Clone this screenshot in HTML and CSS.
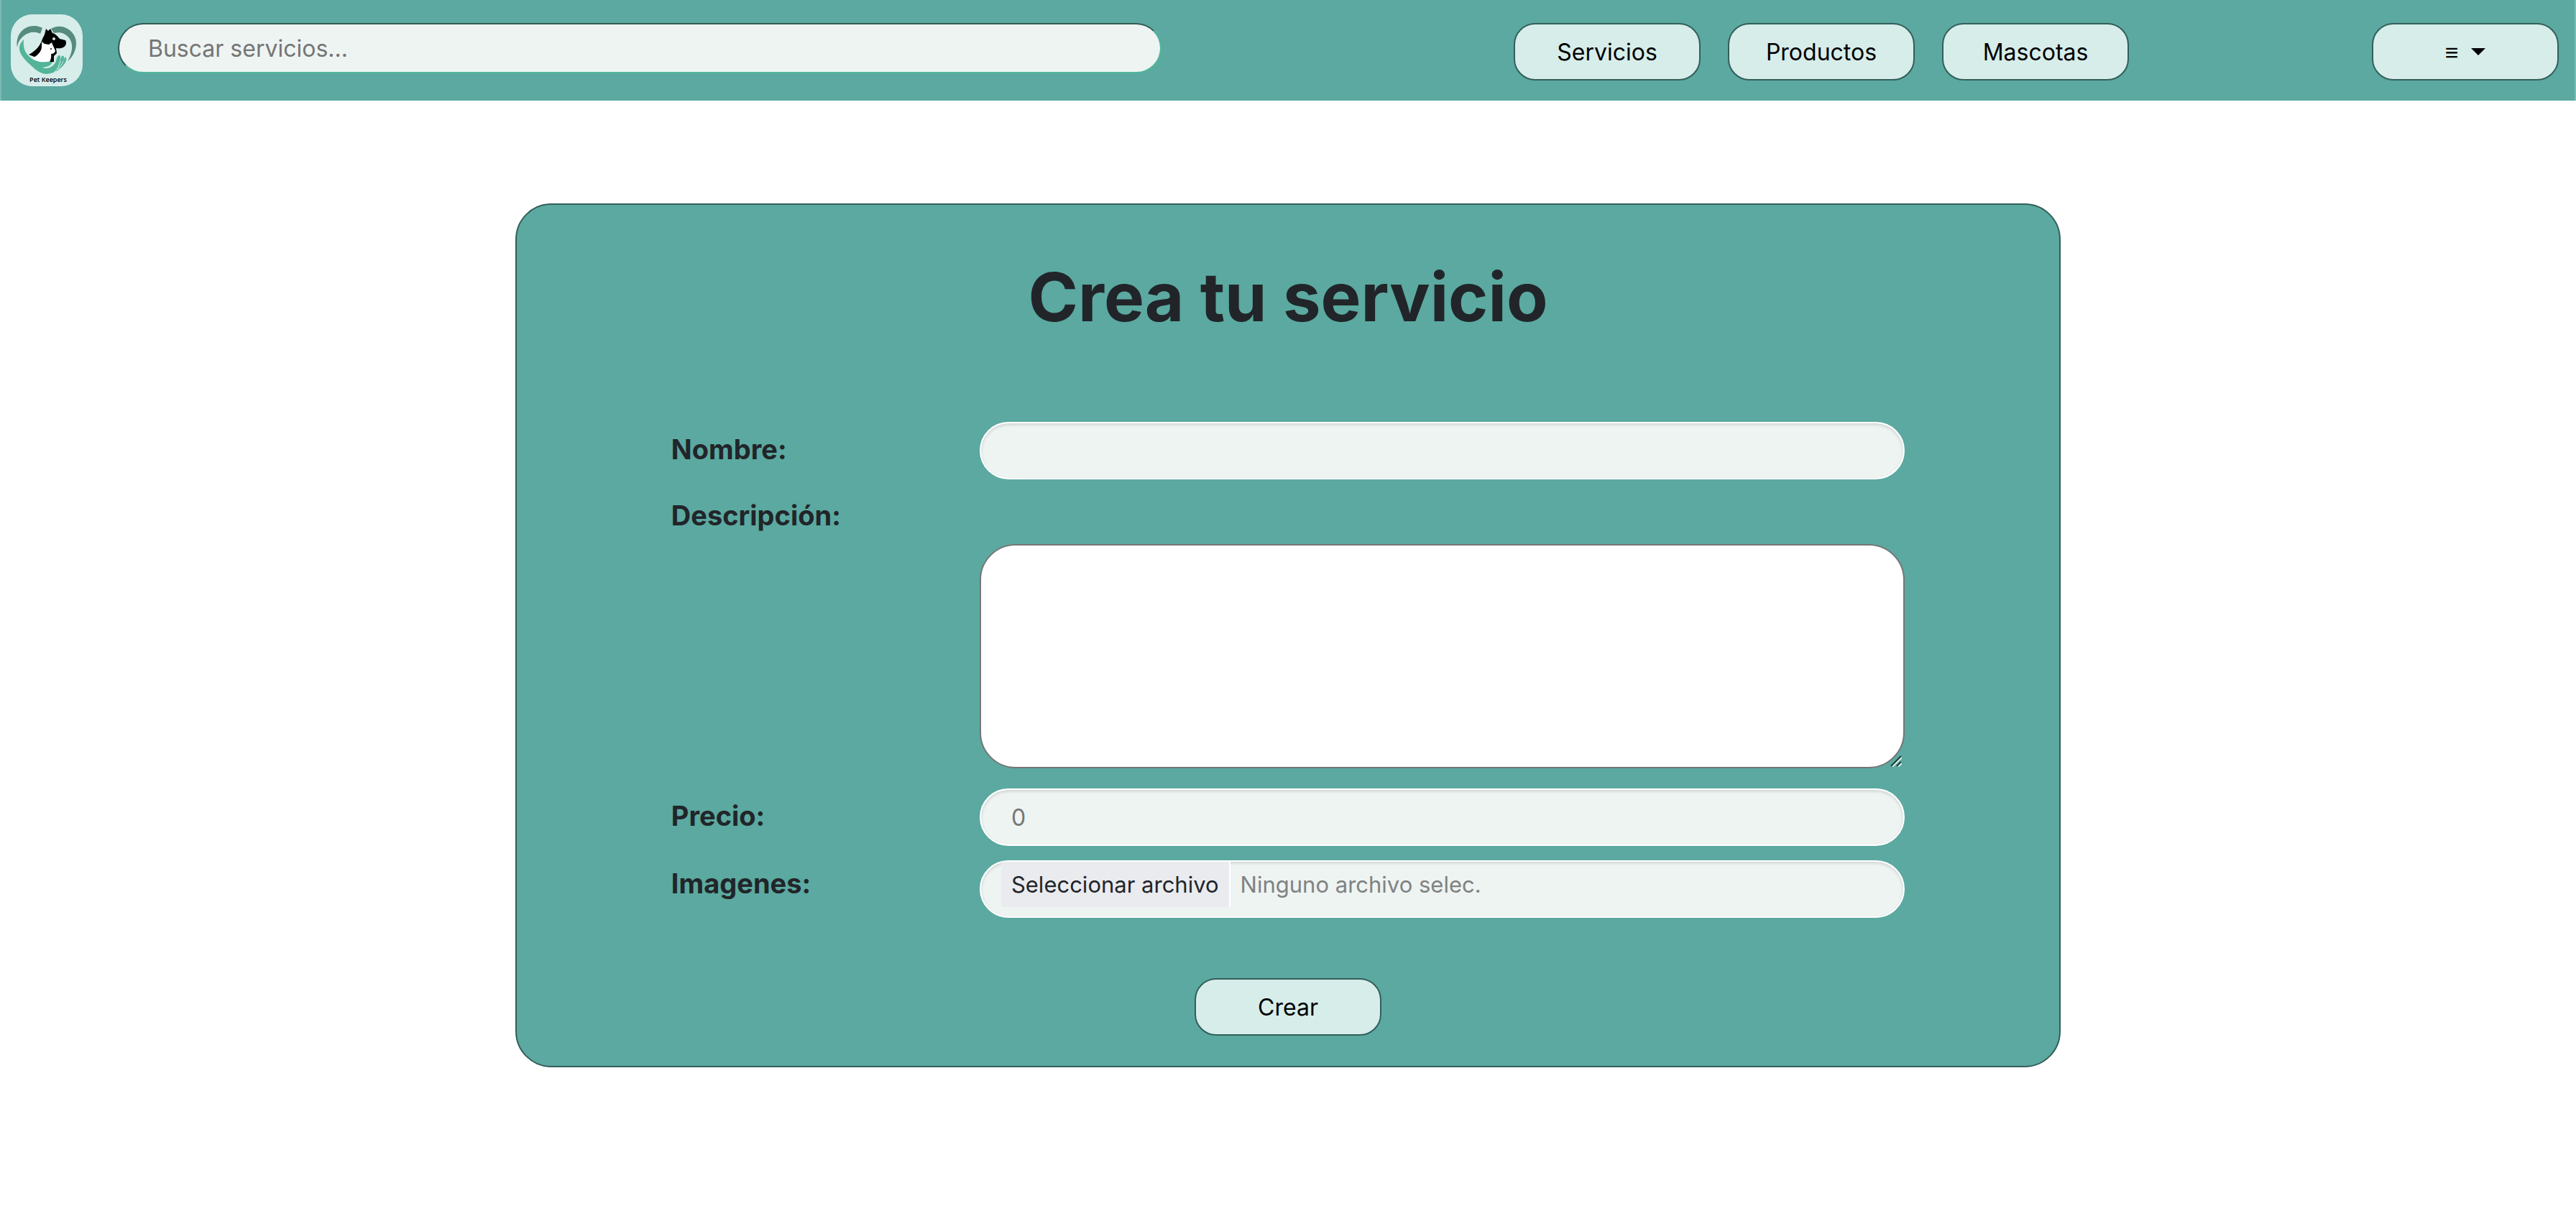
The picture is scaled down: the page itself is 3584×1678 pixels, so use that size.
FILE: index.html
```html
<!DOCTYPE html>
<html lang="es">
<head>
<meta charset="utf-8">
<meta name="viewport" content="width=device-width, initial-scale=1">
<title>Pet Keepers</title>
<link rel="stylesheet" href="styles.css">
</head>
<body>
<header class="topbar">
  <a class="logo" href="#" aria-label="Pet Keepers">
    <svg viewBox="0 0 100 100" aria-hidden="true">
      <path fill="#578b7f" d="M9 46C6 29 17 16 33 16C38 16 42 18 44 19L41 27C33 23 24 25 18 30C12 35 10 39 9 46Z"/>
      <path fill="#578b7f" d="M56 20C63 16 71 16 77 19C90 25 94 39 89 51C87 57 83 62 79 65C86 53 87 42 82 34C76 25 67 24 60 26Z"/>
      <path fill="#000" d="M47 28L49 20L52 23L55 20L58 26C63 27 66 32 68 34L76 36C78 39 77 44 73 46C69 48 65 47 63 47L64 54L60 58L60 66L54 67L25 56C35 51 42 42 44 34Z"/>
      <circle fill="#d7edea" cx="60" cy="34" r="2"/>
      <path fill="#fff" d="M43 45L43 38L47 41L53 42L57 39C58 43 61 47 62 51C61 54 58 55 56 55C57 62 54 68 50 69C43 70 34 66 30 61C38 57 43 51 43 45Z"/>
      <circle cx="56" cy="48" r="1"/>
      <path fill="#54b498" d="M18 35C17 45 19 52 25 58C33 66 43 67 50 66C54 65 57 65 57 68C55 72 49 73 44 74C53 77 60 72 63 65C64 60 65 57 68 57C70 58 69 61 68 65L71 58C74 57 75 59 73 65L75 60C78 59 78 62 76 67C71 75 62 82 50 83C42 83 34 77 27 70C17 61 11 53 12 45C13 40 16 37 18 35Z"/>
      <path fill="none" stroke="#d7edea" stroke-width="1" d="M69 64C68 71 65 76 61 80M73 65C71 70 68 74 65 77"/>
      <text class="logo-text" x="52" y="94" text-anchor="middle">Pet Keepers</text>
    </svg>
  </a>
  <input class="search" type="search" placeholder="Buscar servicios..." aria-label="Buscar servicios">
  <nav class="nav">
    <button class="btn" type="button">Servicios</button>
    <button class="btn" type="button">Productos</button>
    <button class="btn" type="button">Mascotas</button>
  </nav>
  <button class="btn menu" type="button" aria-label="Menú"><span>≡</span><i class="caret"></i></button>
</header>
<main>
  <form class="card">
    <h1>Crea tu servicio</h1>
    <div class="field">
      <label for="nombre">Nombre:</label>
      <input class="control" id="nombre" type="text">
    </div>
    <div class="field description">
      <label for="descripcion">Descripción:</label>
      <div class="area">
        <textarea id="descripcion"></textarea>
        <svg class="grip" viewBox="0 0 16 16" aria-hidden="true">
          <path stroke="#1d3b38" stroke-width="2" d="M1 15L15 1M9 15L15 9"/>
          <path stroke="#d7e9e6" stroke-width="2" d="M3 16L16 3M11 16L16 11"/>
        </svg>
      </div>
    </div>
    <div class="field">
      <label for="precio">Precio:</label>
      <input class="control" id="precio" type="text" inputmode="decimal" placeholder="0">
    </div>
    <div class="field images">
      <label for="imagenes">Imagenes:</label>
      <div class="control file">
        <input id="imagenes" type="file">
        <span class="file-button">Seleccionar archivo</span>
        <span class="file-name">Ninguno archivo selec.</span>
      </div>
    </div>
    <button class="btn submit" type="submit">Crear</button>
  </form>
</main>
</body>
</html>
```
FILE: styles.css
```css
* {
  box-sizing: border-box;
}

body {
  margin: 0;
  background: #fff;
  color: #212529;
  font-family: Inter, "Liberation Sans", sans-serif;
  font-size: 32px;
}

button,
input,
textarea {
  font: inherit;
}

.topbar {
  display: flex;
  align-items: flex-start;
  height: 140px;
  padding: 0 22px 0 13px;
  border: solid #7abbb3;
  border-width: 0 2px;
  background: #5ba9a0;
}

.logo {
  flex: none;
  width: 100px;
  height: 100px;
  margin: 20px 49px 0 0;
  border-radius: 30px;
  background: #d7edea;
}

.logo svg {
  display: block;
}

.logo-text {
  font: 600 9px "Open Sans", sans-serif;
}

.search {
  flex: 0 1 1452px;
  min-width: 0;
  height: 70px;
  margin-top: 32px;
  padding: 0 40px;
  border: 2px solid;
  border-color: #2f5d55 #52b69a #52b69a #2f5d55;
  border-radius: 35px;
  background: #eef4f2;
  appearance: none;
}

::placeholder {
  color: #757575;
  opacity: 1;
}

.nav {
  display: flex;
  gap: 38px;
  margin: 32px 0 0 490px;
}

.btn {
  width: 260px;
  height: 80px;
  padding: 0;
  border: 2px solid #335f5a;
  border-radius: 30px;
  background: #d7edea;
  color: #000;
  font-size: 32px;
}

.menu {
  display: flex;
  align-items: center;
  justify-content: center;
  gap: 18px;
  margin: 32px 0 0 auto;
}

.caret {
  border: solid transparent;
  border-width: 10px 10px 0;
  border-top-color: #000;
}

.card {
  width: 60%;
  margin: 143px auto 0;
  padding: 70px 6% 42px;
  border: 2px solid #335f5a;
  border-radius: 50px;
  background: #5ba9a0;
}

h1 {
  margin: 0 0 116px;
  font-size: 94px;
  font-weight: 700;
  line-height: 116px;
  text-align: center;
}

.field {
  display: grid;
  grid-template-columns: 1fr 3fr;
  margin-bottom: 20px;
}

.field > label {
  font-size: 38px;
  font-weight: 700;
  line-height: 76px;
}

.description {
  row-gap: 10px;
  margin-bottom: 28px;
}

.description > label {
  grid-column: 1 / -1;
  line-height: 60px;
}

.images > label {
  line-height: 64px;
}

.control {
  width: 100%;
  height: 80px;
  padding: 0 42px;
  border: 2px solid #fff;
  border-radius: 40px;
  background: #eef4f2;
  box-shadow: inset 0 2px 4px rgba(0, 0, 0, .14);
}

.area {
  position: relative;
  grid-column: 2;
}

textarea {
  display: block;
  width: 100%;
  height: 312px;
  padding: 30px 42px;
  border: 2px solid #767676;
  border-radius: 50px;
  background: #fff;
  resize: none;
}

.grip {
  position: absolute;
  right: 4px;
  bottom: 2px;
  width: 16px;
  height: 16px;
}

.file {
  position: relative;
  display: flex;
  gap: 14px;
  padding: 0 28px;
  font-size: 31px;
  line-height: 64px;
}

.file input {
  position: absolute;
  inset: 0;
  width: 100%;
  opacity: 0;
}

.file-button {
  height: 63px;
  padding: 0 14px;
  border-right: 2px solid #fff;
  background: #eaebef;
}

.file-name {
  color: #808282;
}

.submit {
  display: block;
  margin: 84px auto 0;
}
```
